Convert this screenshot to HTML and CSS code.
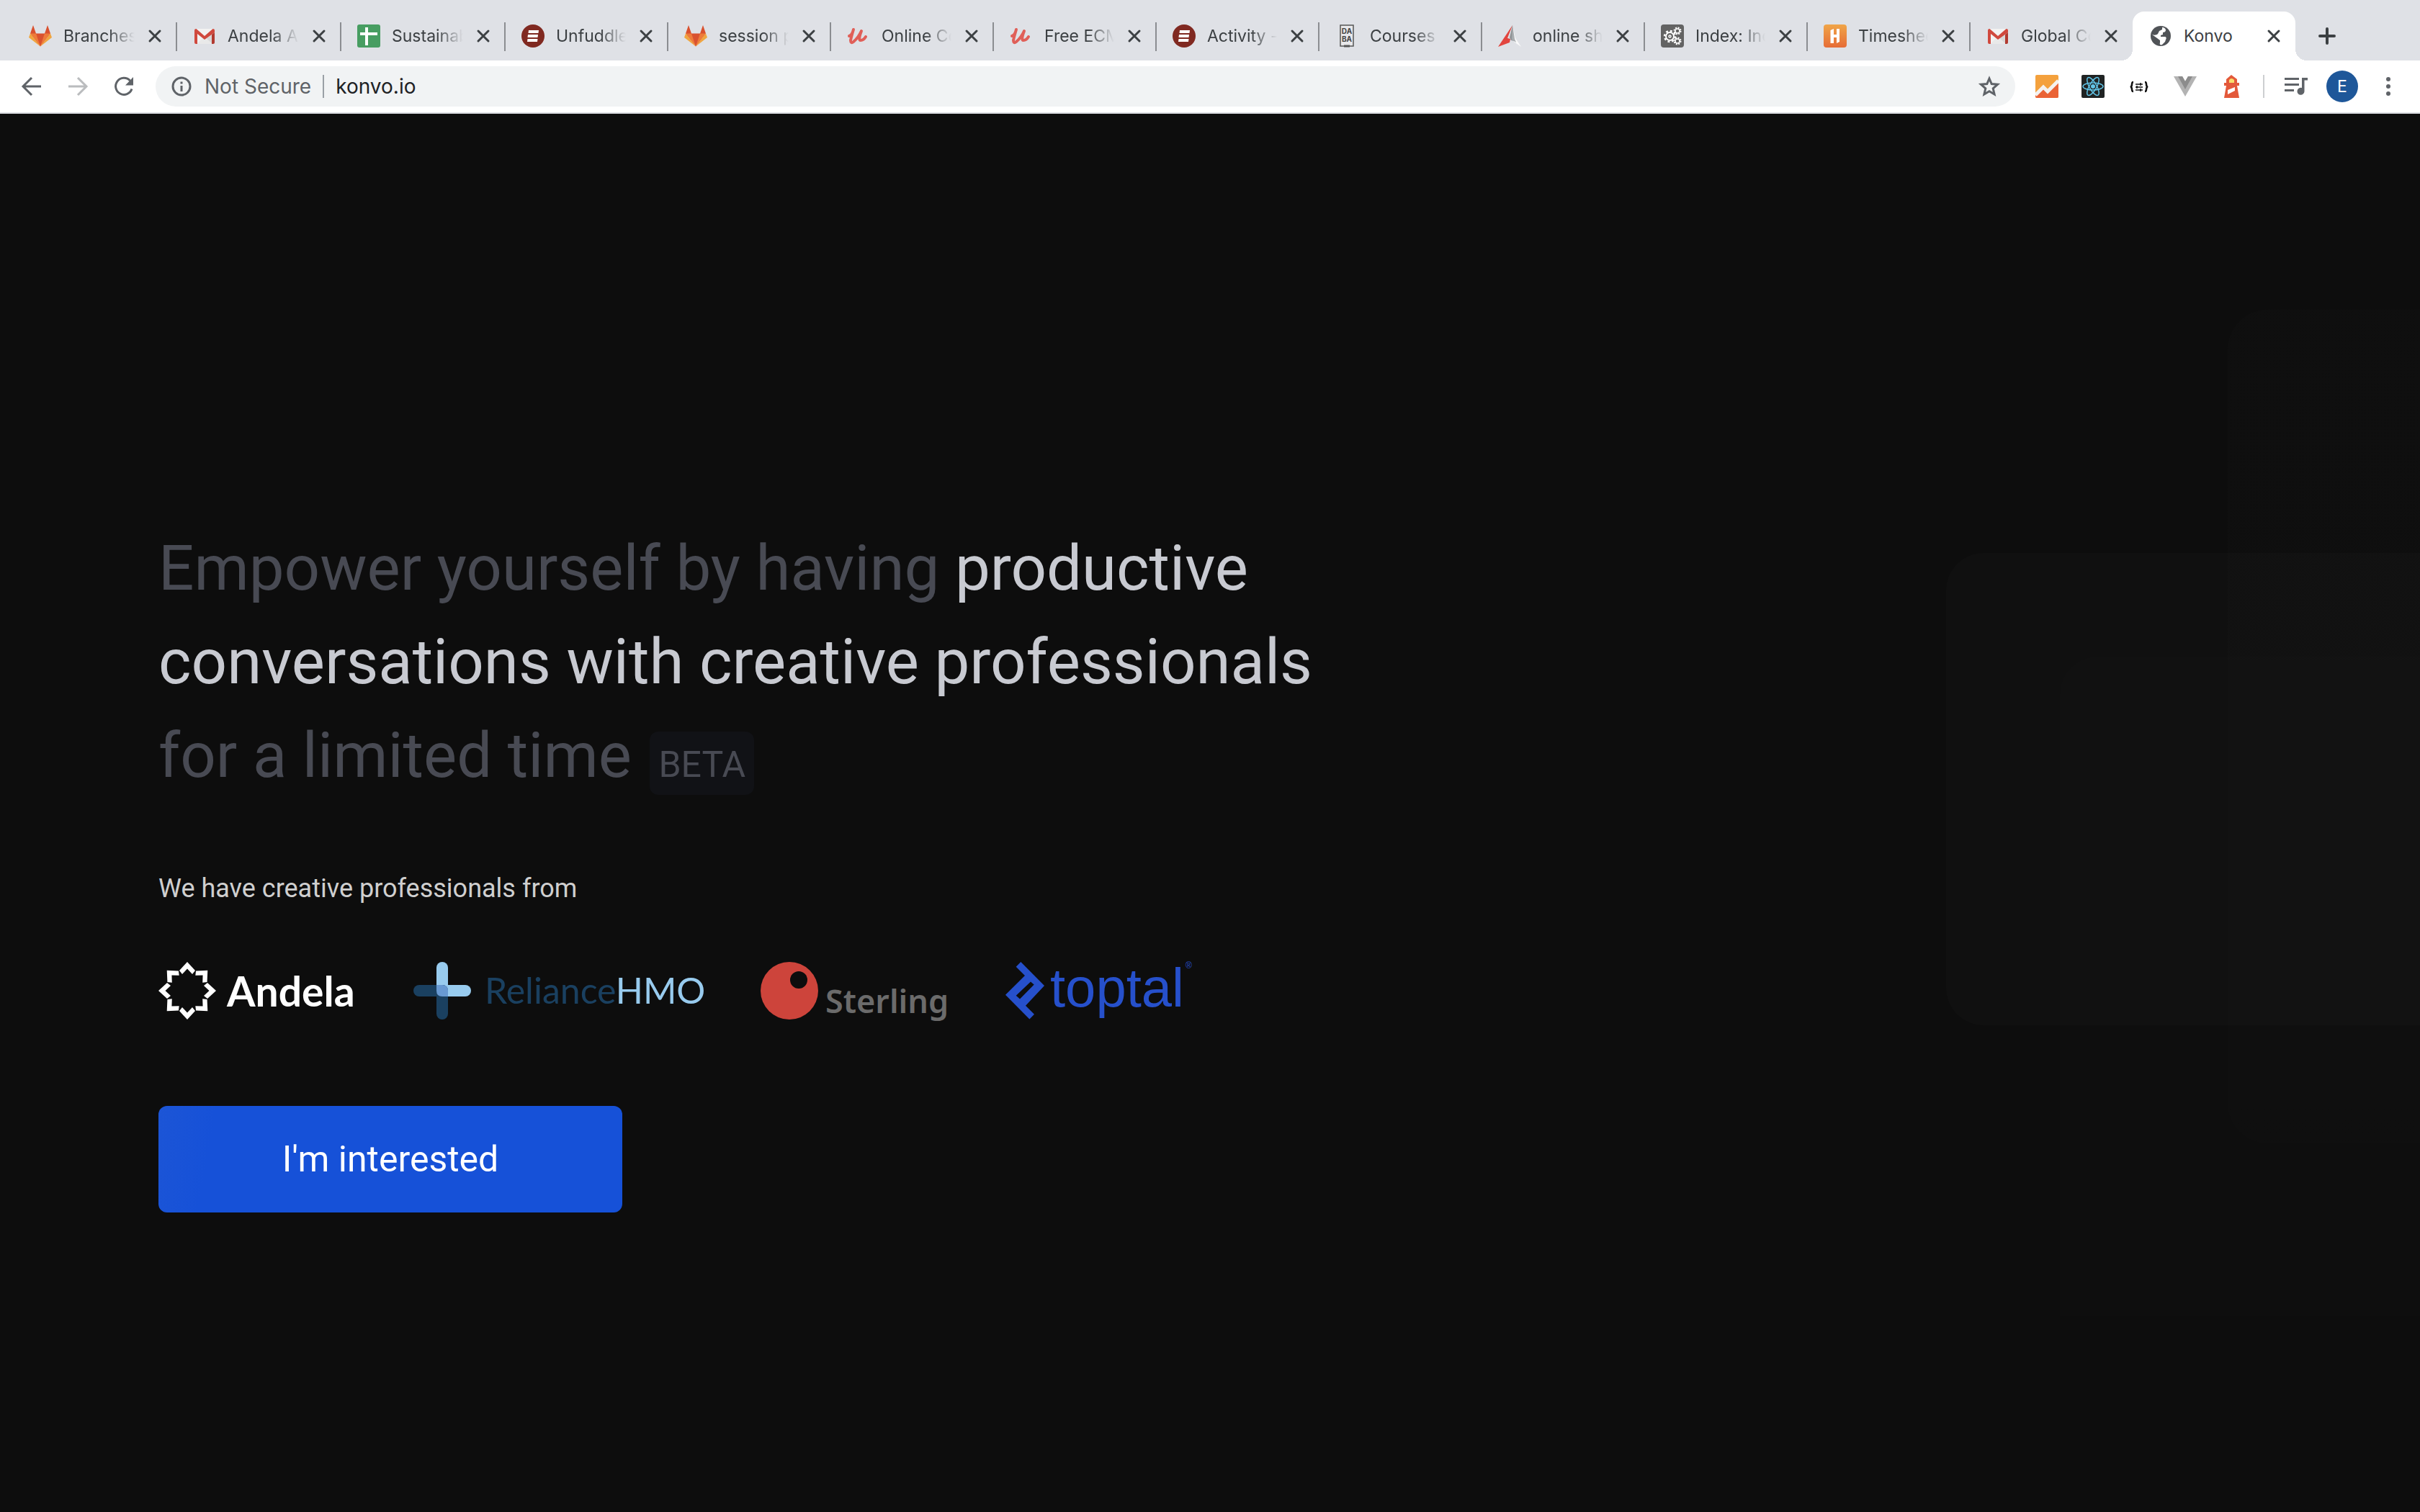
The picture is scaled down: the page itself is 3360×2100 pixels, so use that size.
FILE: index.html
```html
<!DOCTYPE html>
<html lang="en">
<head>
<meta charset="utf-8">
<meta name="viewport" content="width=device-width, initial-scale=1">
<title>Konvo</title>
<link rel="stylesheet" href="styles.css">
</head>
<body>
<svg class="sprite" aria-hidden="true">
  <symbol id="gitlab" viewBox="0 0 32 32">
    <path fill="#d9512f" d="M2 12.500 6 1l4 11.500h12L26 1l4 11.500L16 30.500z"/>
    <path fill="#ee7a3a" d="M2 12.500h8l6 18zM30 12.500h-8l-6 18z"/>
    <path fill="#f0a540" d="M2 12.500 0 18l16 12.500zM30 12.500 32 18 16 30.500z"/>
  </symbol>
  <symbol id="gmail" viewBox="0 0 32 32">
    <path fill="#f2f2f2" d="M4 6h24v21H4z"/>
    <path fill="#d8d8d8" d="M28 10v17H6l10-9z"/>
    <path fill="#e9e9e9" d="m5 27 11-10 11 10z"/>
    <path fill="#d0493e" d="M2 8q0-2 2.500-2L16 16 27.500 6Q30 6 30 8v3L16 21 6 13v14H4q-2 0-2-2z"/>
    <path fill="#b23a30" d="m26 14 4-3v14q0 2-2 2h-2z"/>
  </symbol>
  <symbol id="sheets" viewBox="0 0 32 32">
    <rect width="32" height="32" rx="3" fill="#479d61"/>
    <path fill="#fff" d="M11 4h4v7h13v4H15v14h-4V15H4v-4h7z"/>
  </symbol>
  <symbol id="unfuddle" viewBox="0 0 32 32">
    <circle cx="16" cy="16" r="16" fill="#802921"/>
    <path fill="#fff" d="M10 8h14l-.5 4H9.500zM9 14h14l-.5 4h-14zM8.500 20h14l-.5 4H8z"/>
  </symbol>
  <symbol id="udemy" viewBox="0 0 32 32">
    <path fill="none" stroke="#e05f58" stroke-width="4" stroke-linecap="round" stroke-linejoin="round" d="M3 16Q7 15 9 7 6 17 5 22q0 5 4 2 7-6 11-15-5 13-1 13 4 0 7-5"/>
  </symbol>
  <symbol id="daba" viewBox="0 0 32 32">
    <path fill="#e8e8ea" stroke="#555" stroke-width="1.500" d="M7 1h18v29H7z"/>
    <path stroke="#555" stroke-width="3" d="M12 30h8"/>
    <text x="16" y="13" text-anchor="middle" class="daba-text">DA</text>
    <text x="16" y="24" text-anchor="middle" class="daba-text">BA</text>
  </symbol>
  <symbol id="arrowhead" viewBox="0 0 32 32">
    <path fill="#e2453f" d="M20 1 0 31l16-6 1-5-4-1z"/>
    <path fill="#8f9396" d="m20 1 1 16 2 6-5-1-2-4z"/>
    <path fill="#fafafa" d="m20 1 4 18 8 12-10-7z"/>
    <path fill="#a9adb0" d="m20 1 3 19 2 5-6-4z"/>
  </symbol>
  <symbol id="gears" viewBox="0 0 32 32">
    <rect width="32" height="32" rx="4" fill="#636363"/>
    <g fill="none" stroke="#fff">
      <circle cx="12.500" cy="16.500" r="5.500" stroke-width="2"/>
      <circle cx="12.500" cy="16.500" r="7.500" stroke-width="2.500" stroke-dasharray="3 2.900"/>
      <circle cx="12.500" cy="16.500" r="1.500" stroke-width="1.500"/>
      <circle cx="23" cy="9" r="3" stroke-width="1.500"/>
      <circle cx="23" cy="9" r="4.500" stroke-width="2" stroke-dasharray="2 1.540"/>
      <circle cx="23" cy="23" r="3" stroke-width="1.500"/>
      <circle cx="23" cy="23" r="4.500" stroke-width="2" stroke-dasharray="2 1.540"/>
    </g>
  </symbol>
  <symbol id="harvest" viewBox="0 0 32 32">
    <linearGradient id="hg" x2="0" y2="1"><stop stop-color="#f0a548"/><stop offset="1" stop-color="#e66c36"/></linearGradient>
    <rect width="32" height="32" rx="4" fill="url(#hg)"/>
    <path fill="#fff" d="M9.500 8 14 6v8h4V6h4v18l-4 2v-8h-4v8H9.500z"/>
  </symbol>
  <symbol id="globe" viewBox="0 0 32 32">
    <circle cx="16" cy="16" r="14" fill="#505357"/>
    <path fill="#fff" d="M18 4c3 0 5 2 5 4s-2 3-4 3v3l-3 1v2h6c2 0 2 3 1 4l-1 3-4 4c-2 1-4 0-3-3v-3l-4-3-7-5c3 1 6 1 8-1l2-4 4-2z"/>
  </symbol>
  <symbol id="close" viewBox="0 0 20 20">
    <path fill="none" stroke="#3c4043" stroke-width="3" stroke-linecap="round" d="m3 3 14 14M17 3 3 17"/>
  </symbol>
</svg>

<header class="browser">
  <div class="tabstrip">
    <ul class="tabs">
      <li class="tab"><a class="tab-link" href="#"><svg class="icon"><use href="#gitlab"/></svg><span class="tab-title">Branches</span></a><button class="tab-close" aria-label="Close tab"><svg><use href="#close"/></svg></button></li>
      <li class="tab"><a class="tab-link" href="#"><svg class="icon"><use href="#gmail"/></svg><span class="tab-title">Andela A</span></a><button class="tab-close" aria-label="Close tab"><svg><use href="#close"/></svg></button></li>
      <li class="tab"><a class="tab-link" href="#"><svg class="icon"><use href="#sheets"/></svg><span class="tab-title">Sustainab</span></a><button class="tab-close" aria-label="Close tab"><svg><use href="#close"/></svg></button></li>
      <li class="tab"><a class="tab-link" href="#"><svg class="icon"><use href="#unfuddle"/></svg><span class="tab-title">Unfuddle</span></a><button class="tab-close" aria-label="Close tab"><svg><use href="#close"/></svg></button></li>
      <li class="tab"><a class="tab-link" href="#"><svg class="icon"><use href="#gitlab"/></svg><span class="tab-title">session p</span></a><button class="tab-close" aria-label="Close tab"><svg><use href="#close"/></svg></button></li>
      <li class="tab"><a class="tab-link" href="#"><svg class="icon"><use href="#udemy"/></svg><span class="tab-title">Online Co</span></a><button class="tab-close" aria-label="Close tab"><svg><use href="#close"/></svg></button></li>
      <li class="tab"><a class="tab-link" href="#"><svg class="icon"><use href="#udemy"/></svg><span class="tab-title">Free ECM</span></a><button class="tab-close" aria-label="Close tab"><svg><use href="#close"/></svg></button></li>
      <li class="tab"><a class="tab-link" href="#"><svg class="icon"><use href="#unfuddle"/></svg><span class="tab-title">Activity -</span></a><button class="tab-close" aria-label="Close tab"><svg><use href="#close"/></svg></button></li>
      <li class="tab"><a class="tab-link" href="#"><svg class="icon"><use href="#daba"/></svg><span class="tab-title">Courses</span></a><button class="tab-close" aria-label="Close tab"><svg><use href="#close"/></svg></button></li>
      <li class="tab"><a class="tab-link" href="#"><svg class="icon"><use href="#arrowhead"/></svg><span class="tab-title">online sh</span></a><button class="tab-close" aria-label="Close tab"><svg><use href="#close"/></svg></button></li>
      <li class="tab"><a class="tab-link" href="#"><svg class="icon"><use href="#gears"/></svg><span class="tab-title">Index: Ind</span></a><button class="tab-close" aria-label="Close tab"><svg><use href="#close"/></svg></button></li>
      <li class="tab"><a class="tab-link" href="#"><svg class="icon"><use href="#harvest"/></svg><span class="tab-title">Timeshee</span></a><button class="tab-close" aria-label="Close tab"><svg><use href="#close"/></svg></button></li>
      <li class="tab tab-before"><a class="tab-link" href="#"><svg class="icon"><use href="#gmail"/></svg><span class="tab-title">Global Co</span></a><button class="tab-close" aria-label="Close tab"><svg><use href="#close"/></svg></button></li>
      <li class="tab tab-active"><a class="tab-link" href="#" aria-current="page"><svg class="icon"><use href="#globe"/></svg><span class="tab-title">Konvo</span></a><button class="tab-close" aria-label="Close tab"><svg><use href="#close"/></svg></button></li>
    </ul>
    <button class="new-tab" aria-label="New tab"><svg viewBox="0 0 24 24"><path stroke="#3c4043" stroke-width="4" stroke-linecap="round" d="M2 12h20M12 2v20"/></svg></button>
  </div>

  <div class="toolbar">
    <div class="nav">
      <button aria-label="Back"><svg class="icon" viewBox="0 0 32 32"><path fill="none" stroke="#5f6368" stroke-width="3" d="M29 16H5M16 4 4 16l12 12"/></svg></button>
      <button aria-label="Forward" disabled><svg class="icon" viewBox="0 0 32 32"><path fill="none" stroke="#babcbe" stroke-width="3" d="M3 16h24M16 4l12 12-12 12"/></svg></button>
      <button aria-label="Reload"><svg class="icon" viewBox="0 0 32 32"><path fill="none" stroke="#5f6368" stroke-width="3" d="M27 19.500A11.500 11.500 0 1 1 24.500 8"/><path fill="#5f6368" d="M29 3v11.500H18z"/></svg></button>
    </div>
    <form class="omnibox">
      <svg class="icon" viewBox="0 0 32 32" aria-hidden="true"><circle cx="16" cy="16" r="12" fill="none" stroke="#5f6368" stroke-width="3"/><path fill="#5f6368" d="M14.500 15h3v8h-3zM14.500 9.500h3v3h-3z"/></svg>
      <label class="security" for="url">Not Secure</label>
      <input class="url" id="url" type="text" value="konvo.io">
      <button type="button" aria-label="Bookmark this page"><svg class="icon" viewBox="0 0 32 32"><path fill="none" stroke="#5f6368" stroke-width="3" d="m16 5 3.200 7.600 8.300.7-6.300 5.500 1.900 8.200L16 22.700 8.900 27l1.900-8.200-6.300-5.500 8.300-.7z"/></svg></button>
    </form>
    <div class="extensions">
      <button aria-label="Analytics"><svg class="icon" viewBox="0 0 32 32"><rect width="32" height="32" rx="2" fill="#f4a13d"/><path fill="#ea6336" d="m0 28 11-11 6 6L32 9v21q0 2-2 2H2q-2 0-2-2z"/><path fill="none" stroke="#f4f2f0" stroke-width="5" d="m0 28 11-11 6 6L32 8"/></svg></button>
      <button aria-label="React Developer Tools"><svg class="icon" viewBox="0 0 32 32"><rect width="32" height="32" rx="2" fill="#202323"/><g fill="none" stroke="#62c5e8" stroke-width="1.500"><ellipse cx="16" cy="16" rx="14" ry="5"/><ellipse cx="16" cy="16" rx="14" ry="5" transform="rotate(60 16 16)"/><ellipse cx="16" cy="16" rx="14" ry="5" transform="rotate(120 16 16)"/></g><circle cx="16" cy="16" r="3" fill="#62c5e8"/></svg></button>
      <button aria-label="JSON viewer"><svg class="icon" viewBox="0 0 32 32"><path fill="none" stroke="#111" stroke-width="2.500" d="M8 10q-2 0-2 3t-2 4q2 0 2 3t2 3M24 10q2 0 2 3t2 4q-2 0-2 3t-2 3"/><path fill="none" stroke="#111" stroke-width="1.500" d="M11 13h10M11 17h10M11 21h10M18 11v4M13 15v4M18 19v4"/></svg></button>
      <button aria-label="Vue Developer Tools"><svg class="icon" viewBox="0 0 32 32"><path fill="#b3b3b3" d="M0 2h12l4 7 4-7h12L16 30z"/><path fill="#8c8c8c" d="M6 2h6l4 7 4-7h6L16 20z"/></svg></button>
      <button aria-label="Lighthouse"><svg class="icon" viewBox="0 0 32 32"><path fill="#e3593a" d="m16 0 8 6v5h3v4h-3l3 17H6l3-17H6v-4h3V6z"/><path fill="#f9dd6c" d="M13 11V7q3-4 7 0v4z"/><path fill="#fff" d="m11 21 10-4v5l-10 5z"/></svg></button>
    </div>
    <div class="account">
      <button aria-label="Media controls"><svg class="icon" viewBox="0 0 32 32"><path fill="none" stroke="#5f6368" stroke-width="3" d="M0 5.500h20M0 13.500h20M0 21.500h13"/><path fill="#5f6368" d="M24 4h8v3.500h-4.500V23a5 5 0 1 1-3.500-5z"/></svg></button>
      <button class="avatar" aria-label="Profile">E</button>
      <button aria-label="Menu"><svg class="icon" viewBox="0 0 32 32"><g fill="#5f6368"><circle cx="16" cy="6" r="3"/><circle cx="16" cy="16" r="3"/><circle cx="16" cy="26" r="3"/></g></svg></button>
    </div>
  </div>
</header>

<main class="page">
  <div class="shape shape-tall" aria-hidden="true"></div>
  <div class="shape shape-wide" aria-hidden="true"></div>
  <div class="shape shape-low" aria-hidden="true"></div>

  <h1 class="headline">Empower yourself by having <strong>productive conversations with creative professionals</strong> for a limited time <span class="beta">BETA</span></h1>
  <p class="intro">We have creative professionals from</p>

  <ul class="logos">
    <li>
      <svg width="274" height="80" viewBox="0 0 274 80" role="img" aria-label="Andela">
        <defs><path id="ray" d="M40 0 51 12l-4 5-7-7.500L33 17l-4-5z"/></defs>
        <g fill="#fff">
          <use href="#ray"/><use href="#ray" transform="rotate(45 40 40)"/><use href="#ray" transform="rotate(90 40 40)"/><use href="#ray" transform="rotate(135 40 40)"/>
          <use href="#ray" transform="rotate(180 40 40)"/><use href="#ray" transform="rotate(225 40 40)"/><use href="#ray" transform="rotate(270 40 40)"/><use href="#ray" transform="rotate(315 40 40)"/>
        </g>
        <text class="word-andela" x="95" y="62">Andela</text>
      </svg>
    </li>
    <li>
      <svg width="402" height="80" viewBox="0 0 402 80" role="img" aria-label="RelianceHMO">
        <rect x="32" width="16" height="48" rx="8" fill="#98cbee"/>
        <rect x="32" y="32" width="48" height="16" rx="8" fill="#98cbee"/>
        <rect y="32" width="48" height="16" rx="8" fill="#1a4060"/>
        <rect x="32" y="32" width="16" height="48" rx="8" fill="#1a4060"/>
        <path fill="#6899d2" d="M32 32h8q8 0 8 8v8h-8q-8 0-8-8z"/>
        <text class="word-reliance" x="99" y="58">Reliance<tspan class="word-hmo">HMO</tspan></text>
      </svg>
    </li>
    <li>
      <svg width="260" height="80" viewBox="0 0 260 80" role="img" aria-label="Sterling">
        <circle cx="40" cy="40" r="40" fill="#cd443b"/>
        <circle cx="53" cy="25" r="12" fill="#0d0d0d"/>
        <text class="word-sterling" x="90" y="71">Sterling</text>
      </svg>
    </li>
    <li>
      <svg width="260" height="80" viewBox="0 0 260 80" role="img" aria-label="toptal">
        <path fill="#2650cb" fill-rule="evenodd" d="M21.300 0 54 33 28 60.700l12 12L33.400 79.500 0 45.700 27 19 14.700 6.700zM35 27.500 14.700 46.800l5.300 4.700 19.700-20z"/>
        <text class="word-toptal" x="62" y="62">toptal</text>
        <text class="word-mark" x="250" y="9">®</text>
      </svg>
    </li>
  </ul>

  <button class="cta">I'm interested</button>
</main>
</body>
</html>
```

FILE: styles.css
```css
* {
  box-sizing: border-box;
}

body {
  margin: 0;
  min-height: 100vh;
  display: flex;
  flex-direction: column;
  background: #0d0d0d;
  font-family: Roboto, sans-serif;
}

button {
  padding: 0;
  border: 0;
  background: none;
  font: inherit;
  color: inherit;
  display: flex;
  align-items: center;
  justify-content: center;
}

ul {
  margin: 0;
  padding: 0;
  list-style: none;
}

.sprite {
  position: absolute;
  width: 0;
  height: 0;
}

.icon {
  width: 32px;
  height: 32px;
  flex: none;
  display: block;
}

/* Browser chrome */

.browser {
  font-family: Inter, sans-serif;
  border-bottom: 2px solid #dadce0;
  background: #fff;
}

.tabstrip {
  display: flex;
  background: #dfe1e6;
  padding: 16px 17px 0;
}

.tabs {
  display: grid;
  grid-template-columns: repeat(3, minmax(0, 228px)) repeat(11, minmax(0, 226px));
}

.tab {
  position: relative;
  height: 68px;
  display: flex;
  align-items: center;
  gap: 16px;
  padding: 0 20px 0 23px;
}

.tab::after {
  content: "";
  position: absolute;
  right: -1px;
  top: 15px;
  width: 2px;
  height: 40px;
  background: #8b8d91;
}

.tab-before::after {
  display: none;
}

.tab-link {
  flex: 1;
  min-width: 0;
  display: flex;
  align-items: center;
  gap: 16px;
  color: #3c4043;
  text-decoration: none;
}

.tab-title {
  flex: 1;
  min-width: 0;
  overflow: hidden;
  white-space: nowrap;
  font-size: 23px;
  line-height: 32px;
  mask-image: linear-gradient(to right, #000 62%, transparent 98%);
}

.tab-close svg {
  width: 20px;
  height: 20px;
  display: block;
}

.tab-active {
  background: #fff;
  border-radius: 16px 16px 0 0;
}

.tab-active .tab-title {
  mask-image: none;
}

.tab-active::before,
.tab-active::after {
  content: "";
  position: absolute;
  top: auto;
  bottom: 0;
  width: 16px;
  height: 16px;
}

.tab-active::before {
  left: -16px;
  background: radial-gradient(circle at 0 0, transparent 16px, #fff 16px);
}

.tab-active::after {
  right: -16px;
  background: radial-gradient(circle at 100% 0, transparent 16px, #fff 16px);
}

.new-tab {
  margin-left: 32px;
}

.new-tab svg {
  width: 24px;
  height: 24px;
}

.toolbar {
  display: flex;
  align-items: center;
  gap: 28px;
  height: 72px;
  padding: 0 28px;
}

.nav {
  display: flex;
  gap: 32px;
}

.omnibox {
  flex: 1;
  display: flex;
  align-items: center;
  height: 56px;
  padding: 0 20px;
  border-radius: 28px;
  background: #f1f3f4;
  font-size: 28px;
  line-height: 32px;
}

.security {
  margin-left: 16px;
  padding-right: 16px;
  border-right: 2px solid #9aa0a6;
  color: #5f6368;
}

.url {
  flex: 1;
  min-width: 0;
  padding: 0 0 0 16px;
  border: 0;
  background: none;
  font: inherit;
  color: #202124;
}

.extensions {
  display: flex;
  gap: 32px;
  padding-right: 28px;
  border-right: 2px solid #cdcfd1;
}

.account {
  display: flex;
  align-items: center;
  gap: 26px;
}

.avatar {
  width: 44px;
  height: 44px;
  border-radius: 50%;
  background: #1e5799;
  color: #fff;
  font-size: 23px;
}

.daba-text {
  font: 700 10px Inter, sans-serif;
  fill: #444;
}

/* Landing page */

.page {
  flex: 1;
  position: relative;
  overflow: hidden;
  padding: 566px 220px 200px;
}

.headline {
  position: relative;
  max-width: 1680px;
  margin: 0;
  font-size: 87px;
  line-height: 130px;
  font-weight: 400;
  color: #484a53;
}

.headline strong {
  font-weight: 400;
  color: #c8cad1;
}

.beta {
  display: inline-block;
  padding: 16px 12px 12px;
  margin-left: 4px;
  border-radius: 12px;
  background: #111216;
  font-size: 50px;
  line-height: 60px;
}

.intro {
  margin: 96px 0 78px;
  font-size: 36px;
  line-height: 48px;
  color: #cfcfcf;
}

.logos {
  display: flex;
  flex-wrap: wrap;
  gap: 80px;
}

.logos svg {
  display: block;
  overflow: visible;
}

.word-andela {
  font: 700 57px Lato, sans-serif;
  fill: #fff;
}

.word-reliance {
  font: 400 50px Lato, sans-serif;
  fill: #1a4060;
}

.word-hmo {
  fill: #98cbee;
}

.word-sterling {
  font: 600 45px "Noto Sans", sans-serif;
  fill: #6b6b6b;
}

.word-toptal {
  font: 400 76px "Liberation Sans", sans-serif;
  fill: #2650cb;
}

.word-mark {
  font: 400 12px "Liberation Sans", sans-serif;
  fill: #2650cb;
}

.cta {
  position: relative;
  margin-top: 120px;
  width: 644px;
  height: 148px;
  border-radius: 12px;
  background: linear-gradient(100deg, #1c55d6, #1651d8 12%);
  color: #fff;
  font-size: 50px;
}

.shape {
  position: absolute;
  right: 0;
}

.shape-tall {
  top: 272px;
  width: 267px;
  height: 1158px;
  border-radius: 56px 0 0 56px;
  background: linear-gradient(rgba(255, 255, 255, .008), rgba(255, 255, 255, .004));
}

.shape-wide {
  top: 610px;
  width: 658px;
  height: 656px;
  border-radius: 52px 0 0 52px;
  background: rgba(255, 255, 255, .014);
}

.shape-low {
  top: 754px;
  width: 500px;
  height: 916px;
  border-radius: 52px 0 0 0;
  background: rgba(255, 255, 255, .006);
}
```
